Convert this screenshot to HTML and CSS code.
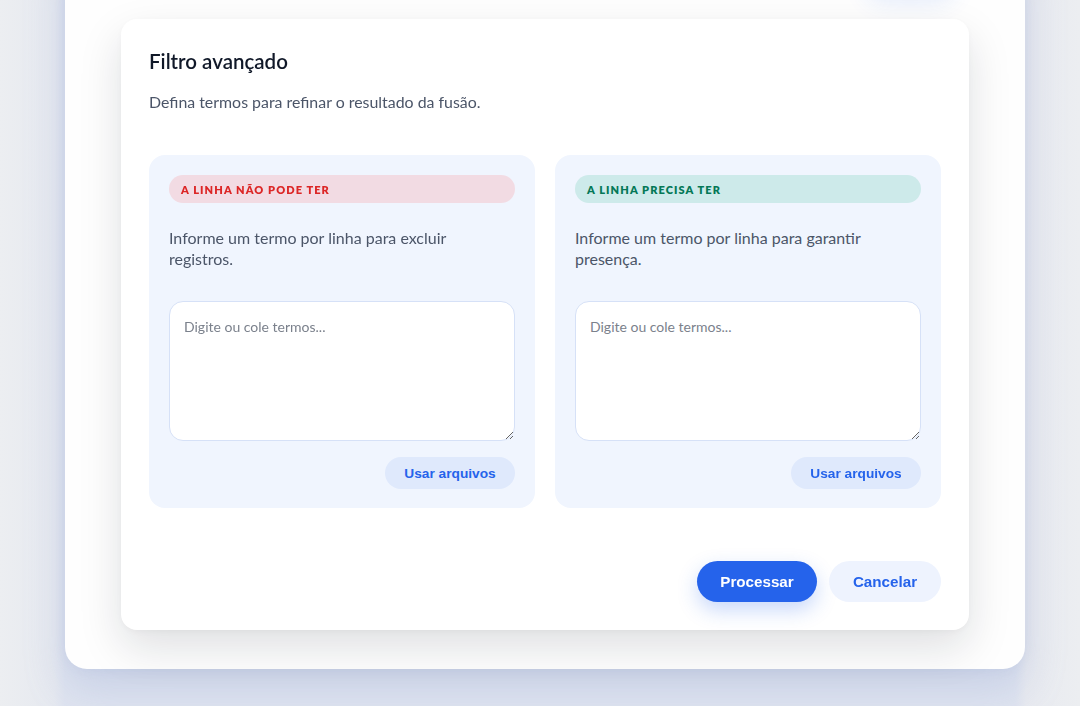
FILE: index.html
```html
<!DOCTYPE html>
<html lang="pt-BR">
<head>
<meta charset="utf-8">
<title>Filtro avançado</title>
<link rel="stylesheet" href="styles.css">
</head>
<body>
<div class="page">
  <div class="shell">
    <div class="shell-top"><span class="ghost-btn"></span></div>
  </div>
</div>

<div class="overlay">
  <section class="modal" role="dialog" aria-labelledby="mt">
    <h2 class="modal-title" id="mt">Filtro avançado</h2>
    <p class="modal-sub">Defina termos para refinar o resultado da fusão.</p>

    <div class="panels">
      <div class="panel">
        <div class="pill pill-red">A LINHA NÃO PODE TER</div>
        <p class="panel-desc">Informe um termo por linha para excluir registros.</p>
        <textarea class="terms" placeholder="Digite ou cole termos..."></textarea>
        <div class="panel-actions"><button class="btn-soft">Usar arquivos</button></div>
      </div>
      <div class="panel">
        <div class="pill pill-green">A LINHA PRECISA TER</div>
        <p class="panel-desc">Informe um termo por linha para garantir presença.</p>
        <textarea class="terms" placeholder="Digite ou cole termos..."></textarea>
        <div class="panel-actions"><button class="btn-soft">Usar arquivos</button></div>
      </div>
    </div>

    <div class="modal-footer">
      <button class="btn-primary">Processar</button>
      <button class="btn-ghost">Cancelar</button>
    </div>
  </section>
</div>
</body>
</html>
```

FILE: styles.css
```css
* { box-sizing: border-box; }

html, body {
  margin: 0;
  height: 100%;
  overflow: hidden;
}

body {
  font-family: Lato, "Open Sans", "Noto Sans", sans-serif;
  background: linear-gradient(90deg, #eceef1 0%, #e6e9f0 5%, #dfe4f0 6%, #dfe4f0 94%, #e8eaf0 95%, #eceef1 100%);
}

.page {
  padding: 0 55px 0 65px;
}

.shell {
  margin-top: -60px;
  height: 729px;
  background: #fefefe;
  border-radius: 22px;
  box-shadow: 0 20px 40px rgba(140, 158, 205, 0.28), 0 0 12px rgba(160, 175, 210, 0.2);
}

.shell-top {
  display: flex;
  justify-content: flex-end;
  padding: 0 70px 0 0;
}

.ghost-btn {
  width: 90px;
  height: 40px;
  margin-top: 10px;
  border-radius: 20px;
  background: #fefefe;
  box-shadow: 0 12px 24px rgba(37, 99, 235, 0.12);
}

.overlay {
  position: fixed;
  inset: 0;
  display: flex;
  justify-content: center;
  align-items: flex-start;
  padding: 19px 0 0 10px;
}

.modal {
  width: 848px;
  background: #ffffff;
  border-radius: 16px;
  padding: 28px 28px 28px;
  box-shadow: 0 18px 44px rgba(15, 23, 42, 0.13), 0 2px 8px rgba(15, 23, 42, 0.04);
}

.modal-title {
  margin: 0;
  font-size: 20.5px;
  line-height: 28px;
  font-weight: 600;
  color: #101828;
}

.modal-sub {
  margin: 16px 0 0;
  font-size: 15.9px;
  line-height: 22px;
  color: #4b5568;
}

.panels {
  margin-top: 42px;
  display: grid;
  grid-template-columns: 1fr 1fr;
  gap: 20px;
}

.panel {
  background: #f0f5fe;
  border-radius: 16px;
  padding: 20px 20px 19px;
  display: flex;
  flex-direction: column;
}

.pill {
  height: 28px;
  border-radius: 14px;
  padding: 0 12px;
  display: flex;
  align-items: center;
  font-size: 11px;
  font-weight: 800;
  letter-spacing: 0.1em;
}

.pill-red { background: #f2dbe3; color: #dc2626; }
.pill-green { background: #cdeaea; color: #047857; }

.panel-desc {
  margin: 24px 0 0;
  font-size: 16px;
  line-height: 21px;
  color: #4b5568;
  padding-right: 50px;
}

.terms {
  margin-top: 32px;
  height: 140px;
  width: 100%;
  border: 1px solid #d6e1f7;
  border-radius: 14px;
  background: #ffffff;
  padding: 15px 14px;
  font-family: Lato, "Open Sans", sans-serif;
  font-size: 14px;
  line-height: 20px;
  color: #1f2937;
  resize: vertical;
  outline: none;
}

.terms::placeholder { color: #7b818c; }

.panel-actions {
  margin-top: 16px;
  display: flex;
  justify-content: flex-end;
}

button {
  font-family: "Liberation Sans", Arial, sans-serif;
  font-weight: 700;
  border: none;
  cursor: pointer;
}

.btn-soft {
  height: 32px;
  width: 130px;
  border-radius: 16px;
  background: #dfe9fc;
  color: #2563eb;
  font-size: 13.7px;
}

.modal-footer {
  margin-top: 53px;
  display: flex;
  justify-content: flex-end;
  gap: 12px;
}

.btn-primary {
  height: 41px;
  width: 120px;
  border-radius: 21px;
  background: #2563eb;
  color: #ffffff;
  font-size: 15.2px;
  box-shadow: 0 8px 20px rgba(37, 99, 235, 0.25);
}

.btn-ghost {
  height: 41px;
  width: 112px;
  border-radius: 21px;
  background: #eef3fe;
  color: #2563eb;
  font-size: 15.2px;
}
```
